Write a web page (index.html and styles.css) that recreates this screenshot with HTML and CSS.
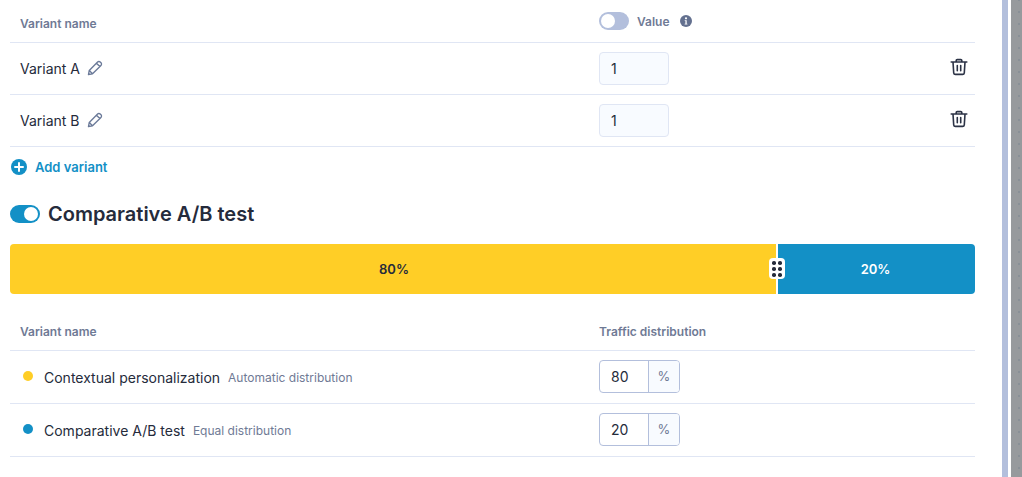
FILE: index.html
```html
<!DOCTYPE html>
<html lang="en">
	<head>
		<title>Variants</title>
		<link rel="stylesheet" href="styles.css">
	</head>
	<body>
		<div class="content">
			<div class="table-row head-row variants-head">
				<div class="name-col head-label">Variant name</div>
				<div class="value-col value-head">
					<span class="toggle toggle-off"><span class="knob"></span></span>
					<span class="head-label">Value</span>
					<svg class="info-icon" viewBox="0 0 12 12" width="12" height="12">
						<circle cx="6" cy="6" r="6" fill="#63708f"/>
						<circle cx="6" cy="3.3" r="1.1" fill="#fff"/>
						<path d="M4.7 5.2h2v3.6h.7v.8H4.6v-.8h.8V6h-.7z" fill="#fff"/>
					</svg>
				</div>
			</div>

			<div class="table-row variant-row">
				<div class="name-col variant-name">Variant A
					<svg class="pencil-icon" viewBox="0 0 16 16" width="18" height="18">
						<path d="M2.2 13.8l.7-3.6 7.4-7.5a1.6 1.6 0 0 1 2.3 0l.7.7a1.6 1.6 0 0 1 0 2.3l-7.5 7.4zM2.9 10.2l2.9 2.9M9.3 3.7l3 3" fill="none" stroke="#6b7a99" stroke-width="1.2" stroke-linejoin="round"/>
					</svg>
				</div>
				<div class="value-col"><div class="value-input">1</div></div>
				<svg class="trash-icon" viewBox="0 0 18 18" width="18" height="18">
					<path d="M1.2 4h15.6M6.2 4V2.6c0-.6.4-1 1-1h3.6c.6 0 1 .4 1 1V4M3 4l.7 10.8c.1.9.7 1.6 1.7 1.6h7.2c1 0 1.6-.7 1.7-1.6L15 4M7.3 7.6v5.2M10.7 7.6v5.2" fill="none" stroke="#2b3245" stroke-width="1.6" stroke-linecap="round" stroke-linejoin="round"/>
				</svg>
			</div>

			<div class="table-row variant-row">
				<div class="name-col variant-name">Variant B
					<svg class="pencil-icon" viewBox="0 0 16 16" width="18" height="18">
						<path d="M2.2 13.8l.7-3.6 7.4-7.5a1.6 1.6 0 0 1 2.3 0l.7.7a1.6 1.6 0 0 1 0 2.3l-7.5 7.4zM2.9 10.2l2.9 2.9M9.3 3.7l3 3" fill="none" stroke="#6b7a99" stroke-width="1.2" stroke-linejoin="round"/>
					</svg>
				</div>
				<div class="value-col"><div class="value-input">1</div></div>
				<svg class="trash-icon" viewBox="0 0 18 18" width="18" height="18">
					<path d="M1.2 4h15.6M6.2 4V2.6c0-.6.4-1 1-1h3.6c.6 0 1 .4 1 1V4M3 4l.7 10.8c.1.9.7 1.6 1.7 1.6h7.2c1 0 1.6-.7 1.7-1.6L15 4M7.3 7.6v5.2M10.7 7.6v5.2" fill="none" stroke="#2b3245" stroke-width="1.6" stroke-linecap="round" stroke-linejoin="round"/>
				</svg>
			</div>

			<div class="add-variant">
				<svg viewBox="0 0 16 16" width="16" height="16">
					<circle cx="8" cy="8" r="8" fill="#1390c6"/>
					<path d="M8 4v8M4 8h8" stroke="#fff" stroke-width="2" stroke-linecap="round"/>
				</svg>
				Add variant
			</div>

			<div class="section-title">
				<span class="toggle toggle-on"><span class="knob"></span></span>
				<h2>Comparative A/B test</h2>
			</div>

			<div class="split-bar">
				<div class="split-part part-yellow">80%</div>
				<div class="split-part part-blue">20%</div>
				<div class="split-handle"><span></span><span></span><span></span><span></span><span></span><span></span></div>
			</div>

			<div class="table-row head-row traffic-head">
				<div class="name-col head-label">Variant name</div>
				<div class="value-col head-label">Traffic distribution</div>
			</div>

			<div class="table-row traffic-row">
				<div class="name-col traffic-name">
					<span class="dot dot-yellow"></span>
					<span>Contextual personalization</span>
					<span class="note">Automatic distribution</span>
				</div>
				<div class="value-col">
					<div class="percent-input"><span class="percent-value">80</span><span class="percent-unit">%</span></div>
				</div>
			</div>

			<div class="table-row traffic-row">
				<div class="name-col traffic-name">
					<span class="dot dot-blue"></span>
					<span>Comparative A/B test</span>
					<span class="note">Equal distribution</span>
				</div>
				<div class="value-col">
					<div class="percent-input"><span class="percent-value">20</span><span class="percent-unit">%</span></div>
				</div>
			</div>
		</div>
		<div class="edge-line"></div>
		<div class="overlay"></div>
	</body>
</html>
```

FILE: styles.css
```css
* {
	box-sizing: border-box;
}
html, body {
	height: 100%;
}
body {
	margin: 0;
	display: flex;
	overflow: hidden;
	background: #fff;
	font-family: Inter, "Liberation Sans", sans-serif;
	font-size: 14px;
	color: #252b3b;
}
.content {
	width: 1002px;
	padding: 0 27px 0 10px;
}
.edge-line {
	width: 6px;
	background: #b3bfdc;
}
.overlay {
	flex: 1;
	margin-left: 3px;
	background-color: #979a9d;
	background-image: radial-gradient(#899097 1px, transparent 1.5px);
	background-size: 12px 12px;
	background-position: 2px 6px;
}
.table-row {
	display: flex;
	align-items: center;
	border-bottom: 1px solid #e0e6f4;
}
.name-col {
	width: 589px;
	flex: none;
}
.value-col {
	flex: 1;
}
.head-label {
	font-size: 12px;
	font-weight: 600;
	color: #6f7a95;
}
.head-row .name-col {
	padding-left: 10px;
}
.variants-head {
	height: 43px;
	padding-top: 4px;
}
.value-head {
	display: flex;
	align-items: center;
	padding-bottom: 4px;
}
.value-head .head-label {
	margin-left: 8px;
}
.info-icon {
	margin-left: 10px;
}
.toggle {
	display: inline-block;
	width: 30px;
	height: 18px;
	border-radius: 9px;
	padding: 2px;
	flex: none;
}
.toggle .knob {
	display: block;
	width: 14px;
	height: 14px;
	border-radius: 50%;
	background: #fff;
}
.toggle-off {
	background: #b3bfdc;
}
.toggle-on {
	background: #1390c6;
}
.toggle-on .knob {
	margin-left: 12px;
}
.variant-row {
	height: 52px;
}
.variant-name {
	display: flex;
	align-items: center;
	gap: 6px;
	padding-left: 10px;
}
.pencil-icon {
	margin-top: -2px;
}
.value-input {
	width: 70px;
	height: 33px;
	line-height: 31px;
	padding-left: 11px;
	border: 1px solid #e0e6f4;
	border-radius: 4px;
	background: #f8fbff;
}
.trash-icon {
	margin: -3px 7px 0 0;
}
.add-variant {
	display: flex;
	align-items: center;
	gap: 8px;
	height: 39px;
	padding: 0 0 0 1px;
	font-size: 13px;
	font-weight: 600;
	color: #1390c6;
}
.section-title {
	display: flex;
	align-items: center;
	gap: 8px;
	height: 56px;
}
.section-title h2 {
	margin: 0;
	font-size: 20px;
	font-weight: 600;
	color: #252b3b;
}
.split-bar {
	display: flex;
	gap: 2px;
	height: 50px;
	position: relative;
	margin-top: 2px;
	border-radius: 4px;
	overflow: hidden;
	font-size: 13px;
	font-weight: 600;
}
.split-part {
	display: flex;
	align-items: center;
	justify-content: center;
}
.part-yellow {
	width: 766px;
	padding-left: 2px;
	background: #ffce26;
	color: #252b3b;
}
.part-blue {
	flex: 1;
	padding-right: 2px;
	background: #1390c6;
	color: #fff;
}
.split-handle {
	position: absolute;
	left: 759px;
	top: 14px;
	width: 16px;
	height: 21px;
	padding: 3px 0;
	border-radius: 4px;
	background: #fff;
	display: grid;
	grid-template-columns: 3.5px 3.5px;
	grid-auto-rows: 3.5px;
	justify-content: center;
	gap: 2.5px;
}
.split-handle span {
	border-radius: 50%;
	background: #252b3b;
}
.traffic-head {
	height: 57px;
	padding-top: 18px;
}
.traffic-row {
	height: 53px;
}
.traffic-name {
	display: flex;
	align-items: center;
	padding-left: 13px;
}
.dot {
	width: 10px;
	height: 10px;
	border-radius: 50%;
	margin-right: 11px;
	margin-top: -3px;
}
.dot-yellow {
	background: #ffce26;
}
.dot-blue {
	background: #1390c6;
}
.note {
	margin-left: 8px;
	font-size: 12px;
	color: #6f7a95;
}
.percent-input {
	display: flex;
	width: 81px;
	height: 33px;
	margin-top: -2px;
	line-height: 31px;
	border: 1px solid #b3bfdc;
	border-radius: 4px;
	overflow: hidden;
}
.percent-value {
	width: 49px;
	padding-left: 11px;
	border-right: 1px solid #b3bfdc;
}
.percent-unit {
	flex: 1;
	text-align: center;
	background: #f8fbff;
	color: #6f7a95;
	font-size: 13px;
}
```
